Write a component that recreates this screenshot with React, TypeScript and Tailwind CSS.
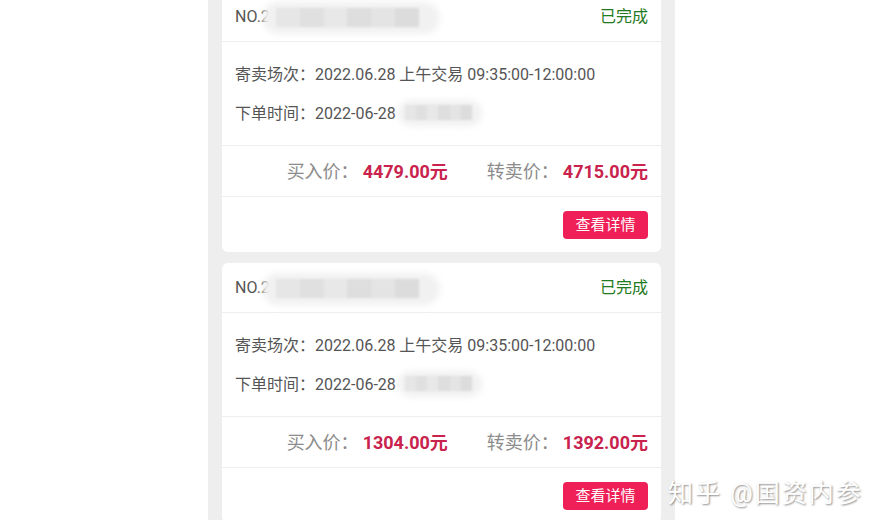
import React from "react";

const FONT = { fontFamily: '"Roboto", "Noto Sans CJK SC", sans-serif' };

function Blob({ className }: { className: string }) {
  return (
    <div className={"absolute " + className}>
      <div className="absolute inset-0 rounded-full bg-[#f1f1f1] blur-[3px]" />
      <div className="absolute left-[8%] right-[12%] top-[18%] bottom-[22%] flex blur-[1px]">
        <div className="flex-1 bg-[#e6e6e6]" />
        <div className="flex-1 bg-[#e0e0e0]" />
        <div className="flex-1 bg-[#e8e8e8]" />
        <div className="flex-1 bg-[#dedede]" />
        <div className="flex-1 bg-[#e4e4e4]" />
        <div className="flex-1 bg-[#dcdcdc]" />
      </div>
    </div>
  );
}

function Card({
  no,
  buy,
  sell,
}: {
  no: string;
  buy: string;
  sell: string;
}) {
  return (
    <div className="rounded-[6px] bg-white">
      <div className="relative flex h-[50px] items-center justify-between border-b border-[#eeeeee] px-[13px]">
        <span className="text-[16px] text-[#555555]">{no}</span>
        <Blob className="left-[40px] top-[10px] h-[32px] w-[178px]" />
        <span className="text-[16px] text-[#1f7a22]">已完成</span>
      </div>
      <div className="flex h-[104px] flex-col gap-[17px] border-b border-[#eeeeee] px-[13px] pt-[22px] text-[16px] leading-[22px] text-[#555555]">
        <div>寄卖场次：2022.06.28 上午交易 09:35:00-12:00:00</div>
        <div className="relative">
          下单时间：2022-06-28
          <Blob className="left-[163px] top-[-3px] h-[26px] w-[84px]" />
        </div>
      </div>
      <div className="flex h-[51px] items-center justify-end gap-[39px] border-b border-[#eeeeee] pr-[13px] text-[18px]">
        <div className="flex items-center gap-[4px]">
          <span className="text-[#8c8c8c]">买入价：</span>
          <span className="font-bold text-[#c8224d]">{buy}元</span>
        </div>
        <div className="flex items-center gap-[4px]">
          <span className="text-[#8c8c8c]">转卖价：</span>
          <span className="font-bold text-[#c8224d]">{sell}元</span>
        </div>
      </div>
      <div className="flex h-[55px] items-start justify-end pr-[13px] pt-[14px]">
        <button className="flex h-[28px] w-[85px] items-center justify-center rounded-[4px] bg-[#ef1f58] text-[15px] text-white">
          查看详情
        </button>
      </div>
    </div>
  );
}

export default function App() {
  return (
    <div className="relative h-[528px] w-[883px] overflow-hidden bg-white" style={FONT}>
      <div className="ml-[208px] h-[528px] w-[467px] bg-[#eeeeee] px-[14px]">
        <div className="-mt-[8px] flex flex-col gap-[11px]">
          <Card no="NO.2" buy="4479.00" sell="4715.00" />
          <Card no="NO.2" buy="1304.00" sell="1392.00" />
        </div>
      </div>
      <div className="absolute left-[668px] top-[475px] text-[25px] tracking-[2px] text-white [text-shadow:1px_1px_2px_rgba(0,0,0,0.45)]">
        知乎 @国资内参
      </div>
    </div>
  );
}
